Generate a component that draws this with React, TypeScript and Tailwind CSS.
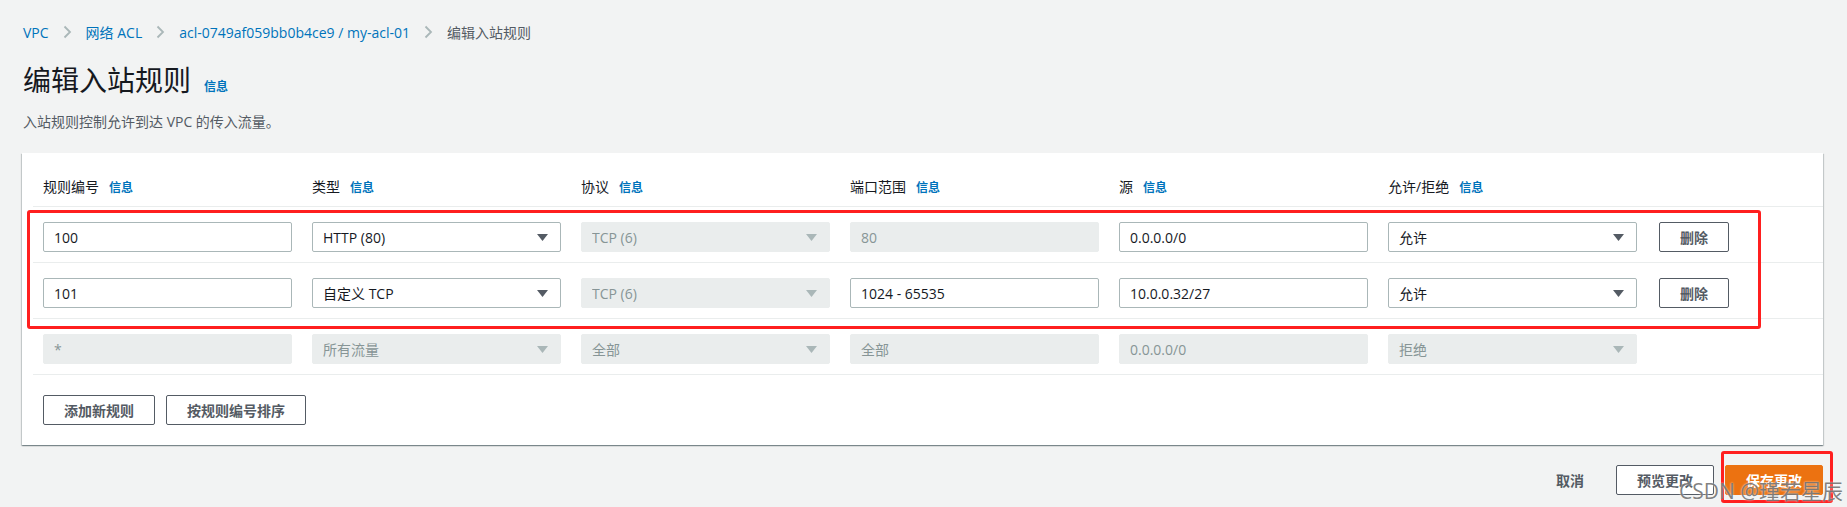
const font = "font-['Open_Sans','Noto_Sans_CJK_SC',sans-serif]";

type Cell =
  | { kind: "input"; value: string; disabled?: boolean }
  | { kind: "select"; value: string; disabled?: boolean };

const headers = ["规则编号", "类型", "协议", "端口范围", "源", "允许/拒绝"];

const rows: { cells: Cell[]; removable: boolean }[] = [
  {
    removable: true,
    cells: [
      { kind: "input", value: "100" },
      { kind: "select", value: "HTTP (80)" },
      { kind: "select", value: "TCP (6)", disabled: true },
      { kind: "input", value: "80", disabled: true },
      { kind: "input", value: "0.0.0.0/0" },
      { kind: "select", value: "允许" },
    ],
  },
  {
    removable: true,
    cells: [
      { kind: "input", value: "101" },
      { kind: "select", value: "自定义 TCP" },
      { kind: "select", value: "TCP (6)", disabled: true },
      { kind: "input", value: "1024 - 65535" },
      { kind: "input", value: "10.0.0.32/27" },
      { kind: "select", value: "允许" },
    ],
  },
  {
    removable: false,
    cells: [
      { kind: "input", value: "*", disabled: true },
      { kind: "select", value: "所有流量", disabled: true },
      { kind: "select", value: "全部", disabled: true },
      { kind: "input", value: "全部", disabled: true },
      { kind: "input", value: "0.0.0.0/0", disabled: true },
      { kind: "select", value: "拒绝", disabled: true },
    ],
  },
];

function Chevron() {
  return (
    <svg width="9" height="14" viewBox="0 0 9 14" fill="none">
      <polyline points="1.5,1.5 7,7 1.5,12.5" stroke="#aab7b8" strokeWidth="1.8" />
    </svg>
  );
}

function Info({ className = "" }: { className?: string }) {
  return <span className={`text-[12px] font-bold text-[#0073bb] ${className}`}>信息</span>;
}

function Field({ cell }: { cell: Cell }) {
  const base = cell.disabled
    ? "bg-[#eaeded] border-[#eaeded] text-[#879596]"
    : "bg-white border-[#aab7b8] text-[#16191f]";
  return (
    <div className={`flex h-[30px] w-[249px] items-center rounded-[2px] border pl-[10px] pr-[12px] text-[14px] ${base}`}>
      <span className="flex-1 truncate">{cell.value}</span>
      {cell.kind === "select" && (
        <svg width="11" height="7" viewBox="0 0 11 7">
          <path d="M0 0h11L5.5 7z" fill={cell.disabled ? "#aab7b8" : "#545b64"} />
        </svg>
      )}
    </div>
  );
}

function Button({ children, primary = false }: { children: React.ReactNode; primary?: boolean }) {
  return (
    <div
      className={
        primary
          ? "flex h-[30px] items-center rounded-[2px] border border-[#ec7211] bg-[#ec7211] px-5 text-[14px] font-bold text-white"
          : "flex h-[30px] items-center rounded-[2px] border border-[#545b64] bg-white px-5 text-[14px] font-bold text-[#545b64]"
      }
    >
      {children}
    </div>
  );
}

export default function App() {
  return (
    <div className={`relative min-h-[507px] bg-[#f2f3f3] pl-[22px] pr-[24px] pt-[22px] text-[#16191f] ${font}`}>
      {/* breadcrumb */}
      <div className="flex h-5 items-center gap-[14px] pl-px text-[14px]">
        <span className="text-[#0073bb]">VPC</span>
        <Chevron />
        <span className="text-[#0073bb]">网络 ACL</span>
        <Chevron />
        <span className="text-[#0073bb]">acl-0749af059bb0b4ce9 / my-acl-01</span>
        <Chevron />
        <span className="text-[#545b64]">编辑入站规则</span>
      </div>

      {/* title */}
      <div className="mt-5 flex items-baseline gap-[13px] pl-px">
        <h1 className="text-[28px] leading-9 font-normal">编辑入站规则</h1>
        <Info />
      </div>
      <p className="mt-[14px] pl-px text-[14px] leading-5 text-[#545b64]">入站规则控制允许到达 VPC 的传入流量。</p>

      {/* table panel */}
      <div className="mt-[21px] bg-white pl-[11px] shadow-[0_1px_1px_0_rgba(0,28,36,0.3),1px_1px_1px_0_rgba(0,28,36,0.15),-1px_1px_1px_0_rgba(0,28,36,0.15)]">
        <div className="flex h-[54px] border-b border-[#eaeded] pt-6">
          {headers.map((h) => (
            <div key={h} className="w-[269px] pl-[10px] text-[14px] leading-5">
              {h}
              <Info className="ml-[10px]" />
            </div>
          ))}
        </div>
        {rows.map((r, i) => (
          <div key={i} className="flex border-b border-[#eaeded] pb-[10px] pt-[15px]">
            {r.cells.map((c, j) => (
              <div key={j} className="w-[269px] pl-[10px]">
                <Field cell={c} />
              </div>
            ))}
            {r.removable && (
              <div className="pl-3">
                <Button>删除</Button>
              </div>
            )}
          </div>
        ))}
        <div className="flex gap-[11px] py-5 pl-[10px]">
          <Button>添加新规则</Button>
          <Button>按规则编号排序</Button>
        </div>
      </div>

      {/* footer actions */}
      <div className="mt-5 flex items-center justify-end gap-[11px]">
        <span className="px-[21px] text-[14px] font-bold text-[#545b64]">取消</span>
        <Button>预览更改</Button>
        <Button primary>保存更改</Button>
      </div>

      {/* annotation overlays */}
      <div className="pointer-events-none absolute left-[27px] top-[210px] h-[119px] w-[1734px] rounded-[3px] border-[3px] border-[#ff1f1f]" />
      <div className="pointer-events-none absolute left-[1721px] top-[451px] h-[52px] w-[112px] rounded-[3px] border-[3px] border-[#ff1f1f]" />
      <div className="pointer-events-none absolute left-[1679px] top-[477px] whitespace-nowrap text-[21px] leading-7 text-[#6b6b6b]/85 [text-shadow:0_0_2px_rgba(255,255,255,0.9)]">
        CSDN @瑾若星辰
      </div>
    </div>
  );
}
